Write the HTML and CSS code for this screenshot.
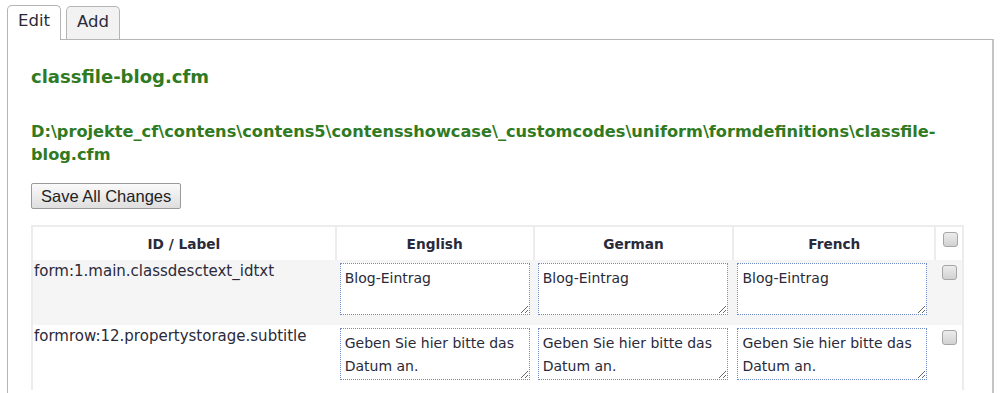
FILE: index.html
```html
<!DOCTYPE html>
<html lang="en">
<head>
    <meta charset="UTF-8">
    <title>Form Definitions</title>
    <link rel="stylesheet" href="styles.css">
</head>
<body>
    <div class="tabs">
        <ul class="tab-nav">
            <li class="tab active">Edit</li>
            <li class="tab">Add</li>
        </ul>

        <div class="tab-panel">
            <h2 class="file-title">classfile-blog.cfm</h2>
            <h3 class="file-path">D:\projekte_cf\contens\contens5\contensshowcase\_customcodes\uniform\formdefinitions\classfile-blog.cfm</h3>

            <button class="save-btn" type="button">Save All Changes</button>

            <table class="labels">
                <colgroup>
                    <col class="col-id">
                    <col class="col-en">
                    <col class="col-de">
                    <col class="col-fr">
                    <col class="col-check">
                </colgroup>
                <thead>
                    <tr>
                        <th>ID / Label</th>
                        <th>English</th>
                        <th>German</th>
                        <th>French</th>
                        <th class="check"><input type="checkbox"></th>
                    </tr>
                </thead>
                <tbody>
                    <tr class="odd">
                        <td class="label-id">form:1.main.classdesctext_idtxt</td>
                        <td><textarea>Blog-Eintrag</textarea></td>
                        <td><textarea>Blog-Eintrag</textarea></td>
                        <td><textarea>Blog-Eintrag</textarea></td>
                        <td class="check"><input type="checkbox"></td>
                    </tr>
                    <tr>
                        <td class="label-id">formrow:12.propertystorage.subtitle</td>
                        <td><textarea>Geben Sie hier bitte das Datum an.</textarea></td>
                        <td><textarea>Geben Sie hier bitte das Datum an.</textarea></td>
                        <td><textarea>Geben Sie hier bitte das Datum an.</textarea></td>
                        <td class="check"><input type="checkbox"></td>
                    </tr>
                </tbody>
            </table>
        </div>
    </div>
</body>
</html>
```

FILE: styles.css
```css
/* Page basics */
body {
    margin: 0;
    padding: 5px 11px 0 7px;
    font-family: "DejaVu Sans", Verdana, sans-serif;
    font-size: 14px;
    color: #2a2a3a;
    background: #ffffff;
    overflow: hidden;
}

/* Tab strip */
.tab-nav {
    list-style: none;
    margin: 0;
    padding: 0;
    display: flex;
    align-items: flex-start;
    gap: 5px;
    position: relative;
    z-index: 1;
}

.tab {
    box-sizing: border-box;
    font-size: 16.5px;
    line-height: 20px;
    color: #2a2a3a;
    padding: 5px 10px 0 10px;
    height: 33px;
    margin-top: 1px;
    border: 1px solid #b5b5b5;
    border-bottom: none;
    border-radius: 5px 5px 0 0;
    background: #f2f2f2;
}

.tab.active {
    background: #ffffff;
    height: 35px;
    margin-top: 0;
    margin-bottom: -1px;
}

/* Panel under the tabs */
.tab-panel {
    border: 1px solid #b5b5b5;
    border-right: 2px solid #c4c4c4;
    border-bottom: none;
    padding: 25px 22px 20px 23px;
    min-height: 340px;
}

.file-title,
.file-path {
    color: #2f7a22;
    font-weight: bold;
    margin: 0;
}

.file-title {
    font-size: 18px;
    line-height: 24px;
    margin-bottom: 31px;
}

.file-path {
    font-size: 16.2px;
    line-height: 23px;
    margin-bottom: 17px;
}

.save-btn {
    display: block;
    box-sizing: border-box;
    font-family: "Liberation Sans", Arial, sans-serif;
    font-size: 16.5px;
    color: #222;
    padding: 0 9px;
    height: 26px;
    border: 1px solid #9a9a9a;
    border-radius: 2px;
    background: linear-gradient(#fafafa, #dedede);
    margin-bottom: 16px;
}

/* Label table */
.labels {
    border-collapse: collapse;
    border-top: 2px solid #ececec;
    border-left: 2px solid #ececec;
    border-right: 2px solid #ececec;
    width: 933px;
}

.col-id { width: 307px; }
.col-en { width: 198px; }
.col-de { width: 200px; }
.col-fr { width: 202px; }
.col-check { width: 26px; }

.labels th {
    font-size: 13.7px;
    font-weight: bold;
    color: #2a2a3a;
    height: 33px;
    padding: 0 4px;
    border-left: 2px solid #ececec;
    background: #ffffff;
}

.labels th:first-child {
    border-left: none;
}

.labels td {
    vertical-align: top;
    padding: 3px 4px 10px 4px;
}

.labels tr.odd td {
    background: #f5f5f5;
}

.labels td.label-id {
    font-size: 15px;
    line-height: 17px;
    padding-left: 1px;
    padding-top: 3px;
}

textarea {
    display: block;
    width: 190px;
    height: 52px;
    box-sizing: border-box;
    font-family: "DejaVu Sans", Verdana, sans-serif;
    font-size: 14px;
    line-height: 23px;
    color: #2a2a3a;
    padding: 3px 4px 0 4px;
    border: 1px dotted #6f8ac4;
    background: #ffffff;
    resize: both;
    overflow: hidden;
}

/* Grey rounded checkboxes */
input[type="checkbox"] {
    appearance: none;
    display: block;
    width: 15px;
    height: 15px;
    margin: 2px 0 0 3px;
    border: 1px solid #a6a6a6;
    border-radius: 3px;
    background: linear-gradient(#ececec, #d2d2d2);
}

.labels th.check {
    vertical-align: top;
}

.labels th.check input {
    margin-top: 5px;
}
```
